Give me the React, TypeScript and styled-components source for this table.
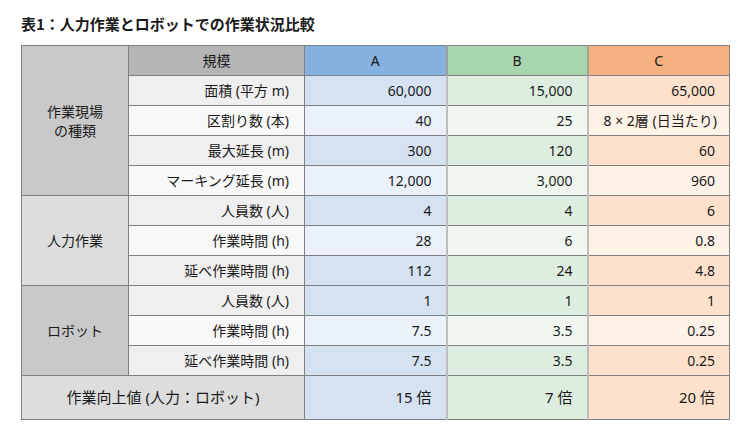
import styled, { createGlobalStyle } from "styled-components";

const GlobalStyle = createGlobalStyle`
  body {
    margin: 0;
    background: #ffffff;
    font-family: "Noto Sans", "Noto Sans CJK JP", sans-serif;
    color: #1a1a1a;
  }
`;

type Col = "a" | "b" | "c";

const palette = {
  head: { a: "#84b1df", b: "#a8d5ae", c: "#f5b07f" },
  odd: { a: "#d5e2f2", b: "#ddeee0", c: "#fde1cc" },
  even: { a: "#eaf1fa", b: "#eff7f0", c: "#fff2e6" },
};

const Page = styled.div`
  padding: 14px 21px 0;
`;

const Title = styled.h1`
  margin: 0 0 11px;
  font-size: 15px;
  line-height: 20px;
  font-weight: 700;
  font-family: "Noto Sans CJK JP", sans-serif;
`;

const Table = styled.table`
  border-collapse: collapse;
  table-layout: fixed;
  width: 708px;
  font-size: 14px;
  border: 1px solid #777;
`;

const Tr = styled.tr<{ $tall?: boolean }>`
  height: ${(p) => (p.$tall ? "44px" : "30px")};
`;

const cellBase = `
  border: 1px solid #808080;
  padding: 0 15px;
  line-height: 19px;
  font-weight: 400;
  font-family: "Noto Sans", "Noto Sans CJK JP", sans-serif;
  white-space: nowrap;
`;

const Group = styled.td<{ $dark?: boolean }>`
  ${cellBase}
  text-align: center;
  background: ${(p) => (p.$dark ? "#c9c9c9" : "#dcdddc")};
`;

const HeadLabel = styled.th`
  ${cellBase}
  text-align: center;
  background: #b5b5b5;
`;

const HeadCol = styled.th<{ $col: Col }>`
  ${cellBase}
  text-align: center;
  background: ${(p) => palette.head[p.$col]};
  ${(p) => (p.$col !== "a" ? "border-left: 2px solid #9aa39a;" : "")}
`;

const Label = styled.td<{ $even?: boolean }>`
  ${cellBase}
  text-align: right;
  background: ${(p) => (p.$even ? "#f7f8f7" : "#efefef")};
`;

const Value = styled.td<{ $col: Col; $even?: boolean }>`
  ${cellBase}
  text-align: right;
  padding-right: 14px;
  background: ${(p) => (p.$even ? palette.even[p.$col] : palette.odd[p.$col])};
  ${(p) => (p.$col !== "a" ? "border-left: 2px solid #bdbdbd;" : "")}
`;

const Summary = styled.td`
  ${cellBase}
  text-align: center;
  font-size: 15px;
  background: #dcdddc;
`;

const SummaryValue = styled(Value)`
  font-size: 15px;
`;

type Row = { label: string; values: [string, string, string] };

const groups: { name: string[]; dark: boolean; rows: Row[] }[] = [
  {
    name: ["作業現場", "の種類"],
    dark: true,
    rows: [
      { label: "面積 (平方 m)", values: ["60,000", "15,000", "65,000"] },
      { label: "区割り数 (本)", values: ["40", "25", "8 × 2層 (日当たり)"] },
      { label: "最大延長 (m)", values: ["300", "120", "60"] },
      { label: "マーキング延長 (m)", values: ["12,000", "3,000", "960"] },
    ],
  },
  {
    name: ["人力作業"],
    dark: false,
    rows: [
      { label: "人員数 (人)", values: ["4", "4", "6"] },
      { label: "作業時間 (h)", values: ["28", "6", "0.8"] },
      { label: "延べ作業時間 (h)", values: ["112", "24", "4.8"] },
    ],
  },
  {
    name: ["ロボット"],
    dark: true,
    rows: [
      { label: "人員数 (人)", values: ["1", "1", "1"] },
      { label: "作業時間 (h)", values: ["7.5", "3.5", "0.25"] },
      { label: "延べ作業時間 (h)", values: ["7.5", "3.5", "0.25"] },
    ],
  },
];

const cols: Col[] = ["a", "b", "c"];

export default function App() {
  const first = groups[0];
  return (
    <Page>
      <GlobalStyle />
      <Title>表1：人力作業とロボットでの作業状況比較</Title>
      <Table>
        <colgroup>
          <col style={{ width: 107 }} />
          <col style={{ width: 176 }} />
          <col style={{ width: 142 }} />
          <col style={{ width: 141 }} />
          <col style={{ width: 142 }} />
        </colgroup>
        <tbody>
          <Tr>
            <Group $dark={first.dark} rowSpan={first.rows.length + 1}>
              {first.name.map((n) => (
                <div key={n}>{n}</div>
              ))}
            </Group>
            <HeadLabel>規模</HeadLabel>
            <HeadCol $col="a">A</HeadCol>
            <HeadCol $col="b">B</HeadCol>
            <HeadCol $col="c">C</HeadCol>
          </Tr>
          {groups.map((g, gi) =>
            g.rows.map((r, i) => (
              <Tr key={g.name.join() + i}>
                {i === 0 && gi > 0 && (
                  <Group $dark={g.dark} rowSpan={g.rows.length}>
                    {g.name.map((n) => (
                      <div key={n}>{n}</div>
                    ))}
                  </Group>
                )}
                <Label $even={i % 2 === 1}>{r.label}</Label>
                {cols.map((c, k) => (
                  <Value key={c} $col={c} $even={i % 2 === 1}>
                    {r.values[k]}
                  </Value>
                ))}
              </Tr>
            ))
          )}
          <Tr $tall>
            <Summary colSpan={2}>作業向上値 (人力：ロボット)</Summary>
            <SummaryValue $col="a">15 倍</SummaryValue>
            <SummaryValue $col="b">7 倍</SummaryValue>
            <SummaryValue $col="c">20 倍</SummaryValue>
          </Tr>
        </tbody>
      </Table>
    </Page>
  );
}
